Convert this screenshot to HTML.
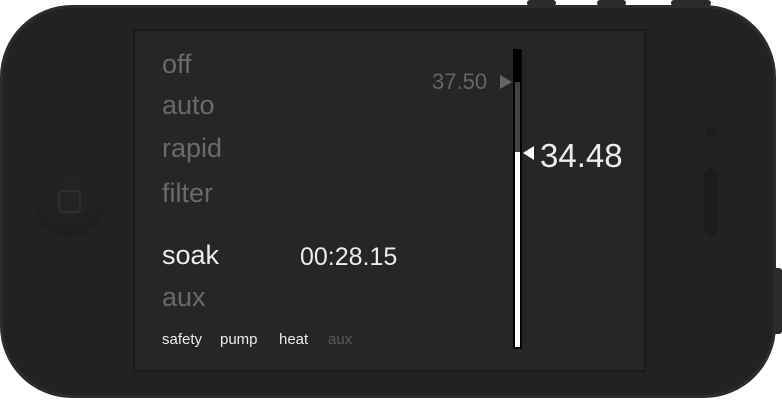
<!DOCTYPE html>
<html><head><meta charset="utf-8"><style>
html,body{margin:0;padding:0;background:#fff;width:782px;height:400px;overflow:hidden;font-family:"Liberation Sans",sans-serif}
.abs{position:absolute}
.phone{left:0;top:5px;width:776px;height:393px;background:#2c2c2c;border-radius:72px}
.phone2{left:3px;top:8px;width:770px;height:387px;background:#222;border-radius:70px}
.screen{left:133px;top:29px;width:513px;height:343px;background:#1a1a1a}
.scr{left:135px;top:31px;width:509px;height:339px;background:#262626}
.t{position:absolute;white-space:nowrap;line-height:1}
.g{color:#6a6a6a}
.w{color:#ececec}
</style></head><body>
<div class="abs" style="left:527px;top:0;width:29px;height:6px;background:#2a2a2a;border-radius:3px"></div>
<div class="abs" style="left:597px;top:0;width:29px;height:6px;background:#2a2a2a;border-radius:3px"></div>
<div class="abs" style="left:671px;top:0;width:40px;height:6px;background:#2a2a2a;border-radius:3px"></div>
<div class="abs" style="left:772px;top:268px;width:10px;height:66px;background:#2a2a2a;border-radius:3px"></div>
<div class="abs phone"></div>
<div class="abs phone2"></div>
<div class="abs" style="left:33px;top:165px;width:72px;height:72px;border-radius:50%;background:radial-gradient(circle at 50% 40%,#252525,#1c1c1c)"></div>
<div class="abs" style="left:58px;top:190px;width:19px;height:19px;border:2px solid #2f2f2f;border-radius:4px"></div>
<div class="abs" style="left:706px;top:128px;width:10px;height:10px;border-radius:50%;background:#1c1c1c"></div>
<div class="abs" style="left:704px;top:168px;width:14px;height:68px;border-radius:7px;background:#1c1c1c"></div>
<div class="abs screen"></div>
<div class="abs scr"></div>
<div class="t g" style="left:162px;top:51px;font-size:27px">off</div>
<div class="t g" style="left:162px;top:92px;font-size:27px">auto</div>
<div class="t g" style="left:162px;top:135px;font-size:27px">rapid</div>
<div class="t g" style="left:162px;top:180px;font-size:27px">filter</div>
<div class="t w" style="left:162px;top:242px;font-size:27px">soak</div>
<div class="t g" style="left:162px;top:284px;font-size:27px">aux</div>
<div class="t w" style="left:300px;top:245px;font-size:25px">00:28.15</div>
<div class="t w" style="left:162px;top:332px;font-size:15px">safety</div>
<div class="t w" style="left:220px;top:332px;font-size:15px">pump</div>
<div class="t w" style="left:279px;top:332px;font-size:15px">heat</div>
<div class="t" style="left:328px;top:332px;font-size:15px;color:#5c5c5c">aux</div>
<div class="t" style="left:432px;top:71px;font-size:22px;color:#666">37.50</div>
<div class="abs" style="left:500px;top:75px;width:0;height:0;border-top:7px solid transparent;border-bottom:7px solid transparent;border-left:12px solid #666"></div>
<div class="abs" style="left:513px;top:49px;width:9px;height:300px;background:#000"></div>
<div class="abs" style="left:515px;top:82px;width:5px;height:70px;background:#444"></div>
<div class="abs" style="left:515px;top:152px;width:5px;height:195px;background:#fff"></div>
<div class="abs" style="left:523px;top:146px;width:0;height:0;border-top:7px solid transparent;border-bottom:7px solid transparent;border-right:11px solid #fff"></div>
<div class="t w" style="left:540px;top:139px;font-size:33px">34.48</div>
</body></html>
